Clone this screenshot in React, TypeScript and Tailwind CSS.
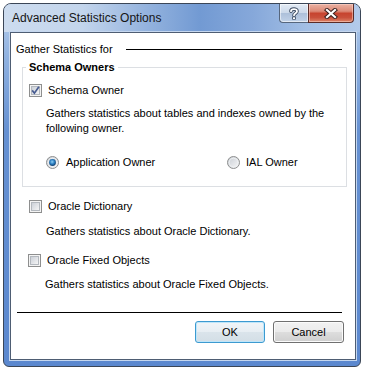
import React from "react";

function CheckBox({ checked, id }: { checked?: boolean; id: string }) {
  return (
    <svg width="13" height="13" viewBox="0 0 13 13" className="shrink-0 block">
      <defs>
        <linearGradient id={id} x1="0" y1="0" x2="1" y2="1">
          <stop offset="0" stopColor="#c9ced6" />
          <stop offset="1" stopColor="#f7f7f7" />
        </linearGradient>
      </defs>
      <rect x="0.5" y="0.5" width="12" height="12" fill="#f4f4f4" stroke="#8e8f8f" />
      <rect x="2.5" y="2.5" width="8" height="8" fill={`url(#${id})`} stroke="#b3b8be" />
      {checked && (
        <path d="M3.2 6.4 L5.4 9.2 L9.9 2.8" stroke="#485c91" strokeWidth="1.7" fill="none" />
      )}
    </svg>
  );
}

function Radio({ checked, id }: { checked?: boolean; id: string }) {
  return (
    <svg width="13" height="13" viewBox="0 0 13 13" className="shrink-0 block">
      <defs>
        <linearGradient id={id} x1="0" y1="0" x2="1" y2="1">
          <stop offset="0" stopColor="#c6cbd2" />
          <stop offset="1" stopColor="#f9f9f9" />
        </linearGradient>
        <radialGradient id={id + "s"} cx="0.45" cy="0.4" r="0.6">
          <stop offset="0" stopColor="#8fd0f5" />
          <stop offset="0.55" stopColor="#2b7fc2" />
          <stop offset="1" stopColor="#0f3e6e" />
        </radialGradient>
      </defs>
      <circle cx="6.5" cy="6.5" r="6" fill={`url(#${id})`} stroke="#8e8f8f" />
      <circle cx="6.5" cy="6.5" r="4.3" fill="none" stroke="#eef0f2" strokeWidth="1" />
      {checked && <circle cx="6.5" cy="6.5" r="3.4" fill={`url(#${id}s)`} />}
    </svg>
  );
}

export default function App() {
  return (
    <div className="w-[366px] h-[372px] bg-white pt-[3px] pl-[3px] font-['Liberation_Sans',Arial,sans-serif] text-[11px] text-black">
      <div className="w-[358px] h-[364px] rounded-t-[8px] rounded-b-[6px] border border-[#3b4657] flex flex-col overflow-hidden bg-[linear-gradient(180deg,#b9cfeb_0%,#8fb1e0_15%,#6691d2_35%,#5b88cf_100%)]">
        {/* title bar */}
        <div className="h-[28px] flex items-start bg-[linear-gradient(90deg,#cddcef_0%,#c3d5ec_22%,#94b3de_40%,#729ad3_55%,#86a8da_70%,#a3bfe5_85%,#b3caea_100%)]">
          <span className="pl-[8px] pt-[7px] text-[12px] leading-[15px] text-[#151515]">
            Advanced Statistics Options
          </span>
          <div className="ml-auto mr-[6px] flex">
            <div className="w-[29px] h-[19px] border-l border-b border-[#56667d] rounded-bl-[4px] flex items-center justify-center bg-[linear-gradient(180deg,#e3ebf5_0%,#ccd9ea_48%,#adc0da_52%,#c1d2e8_100%)] shadow-[inset_0_0_0_1px_rgba(255,255,255,0.55)]">
              <svg width="12" height="13" viewBox="0 0 12 13">
                <path d="M3 4.2 C3 1.5 9 1.3 9 4.2 C9 6.2 6 6.3 6 8.3" fill="none" stroke="#3b4a60" strokeWidth="3.6" strokeLinecap="round" />
                <rect x="4.2" y="9.6" width="3.6" height="3" fill="#3b4a60" />
                <path d="M3 4.2 C3 1.5 9 1.3 9 4.2 C9 6.2 6 6.3 6 8.3" fill="none" stroke="#fff" strokeWidth="1.8" strokeLinecap="round" />
                <rect x="5" y="10.3" width="2" height="1.7" fill="#fff" />
              </svg>
            </div>
            <div className="w-[46px] h-[19px] border-l border-r border-b border-[#5b2b26] rounded-br-[4px] flex items-center justify-center bg-[linear-gradient(180deg,#eab1a3_0%,#dc8a77_40%,#c7442f_52%,#c9503b_75%,#dd8468_100%)] shadow-[inset_0_0_0_1px_rgba(255,220,210,0.5)]">
              <svg width="14" height="11" viewBox="0 0 14 11">
                <path d="M3 2 L11 9 M11 2 L3 9" stroke="#3d2220" strokeWidth="4.2" strokeLinecap="square" />
                <path d="M3 2 L11 9 M11 2 L3 9" stroke="#fff" strokeWidth="2.2" strokeLinecap="square" />
              </svg>
            </div>
          </div>
        </div>

        {/* client area */}
        <div className="flex-1 ml-[6px] mr-[4px] mb-[6px] bg-white border border-[#4e5d73] shadow-[0_0_0_1px_#c5d7ef] flex flex-col">
          <div className="flex items-center mt-[9px] pl-[5px] h-[15px] leading-[15px]">
            <span>Gather Statistics for</span>
            <div className="flex-1 ml-[13px] mr-[13px] h-px bg-black" />
          </div>

          <div className="relative ml-[11px] w-[325px] mt-[10px] border border-[#dcdfe3] pt-[15px] pl-[6px] pb-[16px]">
            <span className="absolute left-[3px] -top-[8px] bg-white px-[3px] font-bold leading-[15px]">
              Schema Owners
            </span>
            <div className="flex items-center h-[15px]">
              <CheckBox checked id="cb1" />
              <span className="ml-[6px] leading-[15px]">Schema Owner</span>
            </div>
            <div className="mt-[8px] pl-[17px] leading-[15px]">
              Gathers statistics about tables and indexes owned by the
              <br />
              following owner.
            </div>
            <div className="mt-[19px] flex items-center h-[15px] pl-[17px]">
              <div className="flex items-center w-[181px]">
                <Radio checked id="r1" />
                <span className="ml-[7px] leading-[15px]">Application Owner</span>
              </div>
              <div className="flex items-center">
                <Radio id="r2" />
                <span className="ml-[6px] leading-[15px]">IAL Owner</span>
              </div>
            </div>
          </div>

          <div className="mt-[12px] ml-[18px] flex items-center h-[15px]">
            <CheckBox id="cb2" />
            <span className="ml-[6px] leading-[15px]">Oracle Dictionary</span>
          </div>
          <div className="mt-[10px] ml-[35px] leading-[15px]">
            Gathers statistics about Oracle Dictionary.
          </div>

          <div className="mt-[14px] ml-[17px] flex items-center h-[15px]">
            <CheckBox id="cb3" />
            <span className="ml-[6px] leading-[15px]">Oracle Fixed Objects</span>
          </div>
          <div className="mt-[9px] ml-[34px] leading-[15px]">
            Gathers statistics about Oracle Fixed Objects.
          </div>

          <div className="mt-[20px] ml-[6px] mr-[13px] h-px bg-black" />

          <div className="mt-[8px] flex justify-end gap-[8px] mr-[11px]">
            <button className="w-[70px] h-[22px] rounded-[3px] border border-[#3c9ad0] bg-[linear-gradient(180deg,#f1f5f8_0%,#e7eef3_48%,#dae4eb_52%,#d3dee6_100%)] shadow-[inset_0_0_0_1px_#bfe6fa] leading-[20px] text-[11px]">
              OK
            </button>
            <button className="w-[71px] h-[22px] rounded-[3px] border border-[#707070] bg-[linear-gradient(180deg,#f2f2f2_0%,#ebebeb_48%,#dddddd_52%,#cfcfcf_100%)] shadow-[inset_0_0_0_1px_#fbfbfb] leading-[20px] text-[11px]">
              Cancel
            </button>
          </div>
        </div>
      </div>
    </div>
  );
}
